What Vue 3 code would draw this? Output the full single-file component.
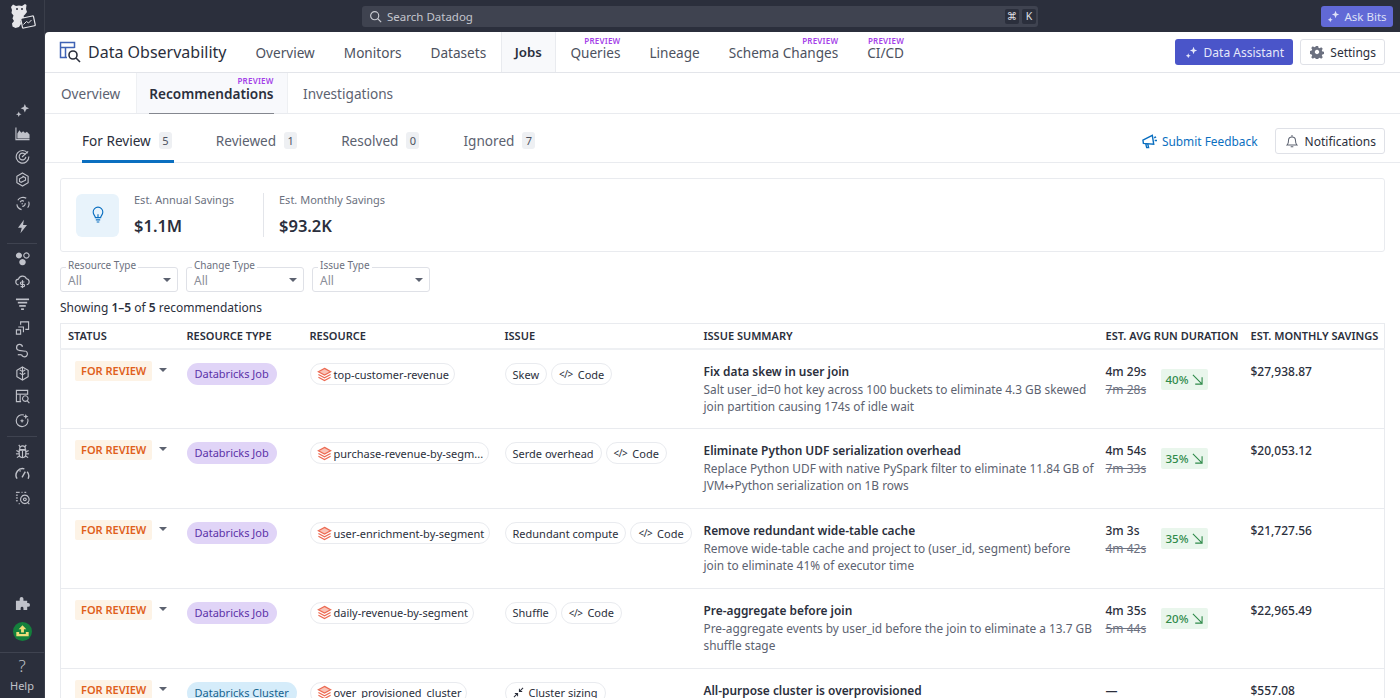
<script setup>
const sideTop = [
  { f: ['M10.5 1l1.3 3.2 3.2 1.3-3.2 1.3-1.3 3.2-1.3-3.2-3.2-1.3 3.2-1.3z', 'M4 9l.9 2.1 2.1.9-2.1.9-.9 2.1-.9-2.1-2.1-.9 2.1-.9z'] },
  { s: ['M1 1.5V14.5H15.5'], f: ['M2.5 13.2V8l2.2-3.4 2 2.6 2-1.6 2 1.8 2-1.2 2.8 2.8v4.2z'] },
  { s: ['M13.5 4.5A6.7 6.7 0 1 0 14.7 8', 'M11 6A3.6 3.6 0 1 0 11.6 8.4', 'M7.5 8.5L14 2.5'] },
  { s: ['M8 1l6 3.5v7L8 15l-6-3.5v-7z', 'M8 4.2l3.2 1.9v2.6L6.5 11 4.8 10V7.2L9.5 4.8'] },
  { s: ['M3 4.5A6.5 6.5 0 0 1 12 2.5', 'M2 9a6.5 6.5 0 0 0 5 5.5', 'M14.5 6a6.5 6.5 0 0 1-1 6.5', 'M5.5 6.5a3 3 0 0 1 4-1', 'M10.8 7.5a3 3 0 0 1-3 3.6', 'M7 8.2h1.5'] },
  { f: ['M9.5 .8L3.2 9.2h4L5.8 15.2l7-8.8H8.6z'] },
]
const sideMid = [
  { f: ['M4.2 1.5a3.2 3.2 0 1 0 .01 0z', 'M8 8.5a3.4 3.4 0 1 0 .01 0z'], s: ['M12.2 2a2.8 2.8 0 1 0 .01 0z'] },
  { s: ['M4 11.5a3 3 0 0 1-.3-6A4.5 4.5 0 0 1 12.2 5a3.3 3.3 0 0 1 .3 6.5', 'M8 6.5v8.5', 'M10 8.5H7a1.2 1.2 0 0 0 0 2.5h2a1.2 1.2 0 0 1 0 2.5H6'] },
  { s: ['M1 2.5h14', 'M3 6h10', 'M4.5 9.5h7', 'M6.5 13h3'], w: 1.8 },
  { s: ['M6 5V2h8.5v8H11', 'M3.5 7.5H9V13', 'M1.5 10.5h4.5v4.5H1.5z'] },
  { s: ['M4 7.8a3.2 3.2 0 1 1 4-3.8', 'M4 7.8l7 1', 'M11 8.5a3.2 3.2 0 1 1-4 4', 'M7 12.5H3'], w: 1.3 },
  { s: ['M8 1l6 3.5v7L8 15l-6-3.5v-7z', 'M8 1v14', 'M8 6l3-2', 'M8 9.5l3-2', 'M8 6L5 4', 'M8 9.5l-3-2'] },
  { s: ['M6.5 13.5H1.5V1.5h12V6', 'M1.5 5.5h12', 'M5.5 5.5v8', 'M11 7.2a3 3 0 1 0 .01 0z', 'M13 12.5l2.3 2.5'] },
  { s: ['M13.5 6a6.3 6.3 0 1 1-4-3.8'], f: ['M11.5 1l.8 2 2 .8-2 .8-.8 2-.8-2-2-.8 2-.8z', 'M7.5 6l.7 1.6 1.6.7-1.6.7-.7 1.6-.7-1.6-1.6-.7 1.6-.7z'] },
]
const sideBottom = [
  { s: ['M5 5a3 3 0 0 1 6 0v1H5z', 'M4.5 6.5h7V11a3.5 3.5 0 0 1-7 0z', 'M8 7v7', 'M4.5 8.5L1.5 7', 'M4.5 10.5H1', 'M5 12.5l-3 2', 'M11.5 8.5l3-1.5', 'M11.5 10.5H15', 'M11 12.5l3 2', 'M5.5 3L4 1', 'M10.5 3L12 1'] },
  { s: ['M2.2 12.5A7 7 0 0 1 10 2', 'M13 5a7 7 0 0 1 1 7.5', 'M7.5 11L11 5', 'M5 3.5l.8 1.3'], w: 1.5 },
  { s: ['M1 2.5h4', 'M7 2.5h1', 'M10 2.5h2', 'M1 5.5h2', 'M1 8.5h2', 'M1 11.5h2', 'M4 14.5h1', 'M10.5 5.5a4.5 4.5 0 1 0 .01 0z', 'M10.5 8.5a1.5 1.5 0 1 0 .01 0z', 'M13.5 13.2l1.8 1.8'] },
]

const navItems = [
  { label: 'Overview' },
  { label: 'Monitors' },
  { label: 'Datasets' },
  { label: 'Jobs', active: true },
  { label: 'Queries', preview: true },
  { label: 'Lineage' },
  { label: 'Schema Changes', preview: true },
  { label: 'CI/CD', preview: true },
]

const reviewTabs = [
  { label: 'For Review', count: 5, active: true },
  { label: 'Reviewed', count: 1 },
  { label: 'Resolved', count: 0 },
  { label: 'Ignored', count: 7 },
]

const filters = ['Resource Type', 'Change Type', 'Issue Type']

const rows = [
  {
    type: 'Databricks Job', resource: 'top-customer-revenue', issue: 'Skew', code: true,
    title: 'Fix data skew in user join',
    text: 'Salt user_id=0 hot key across 100 buckets to eliminate 4.3 GB skewed join partition causing 174s of idle wait',
    now: '4m 29s', before: '7m 28s', pct: '40%', savings: '$27,938.87',
  },
  {
    type: 'Databricks Job', resource: 'purchase-revenue-by-segm...', issue: 'Serde overhead', code: true,
    title: 'Eliminate Python UDF serialization overhead',
    text: 'Replace Python UDF with native PySpark filter to eliminate 11.84 GB of JVM↔Python serialization on 1B rows',
    now: '4m 54s', before: '7m 33s', pct: '35%', savings: '$20,053.12',
  },
  {
    type: 'Databricks Job', resource: 'user-enrichment-by-segment', issue: 'Redundant compute', code: true,
    title: 'Remove redundant wide-table cache',
    text: 'Remove wide-table cache and project to (user_id, segment) before join to eliminate 41% of executor time',
    now: '3m 3s', before: '4m 42s', pct: '35%', savings: '$21,727.56',
  },
  {
    type: 'Databricks Job', resource: 'daily-revenue-by-segment', issue: 'Shuffle', code: true,
    title: 'Pre-aggregate before join',
    text: 'Pre-aggregate events by user_id before the join to eliminate a 13.7 GB shuffle stage',
    now: '4m 35s', before: '5m 44s', pct: '20%', savings: '$22,965.49',
  },
  {
    type: 'Databricks Cluster', cluster: true, resource: 'over_provisioned_cluster', issue: 'Cluster sizing', sizing: true,
    title: 'All-purpose cluster is overprovisioned',
    now: '—', savings: '$557.08',
  },
]
</script>

<template>
  <div class="page">
    <aside class="sidebar">
      <svg class="logo" viewBox="0 0 26 28" width="26" height="28">
        <path fill="#e6e6ea" d="M3 1.5l3 1.5 3-.5 3 .5 3-2 1.5 1-.5 4 1 3-2 2.5-1.5 1.5 1 2-4 3 .5 3-2 3-3.5 1-3-1.5-.5-3 2-2.5-1.5-2.5 1-3-2-2.5.5-3-1-3z" />
        <rect x="11.5" y="14" width="13" height="10" rx="1" fill="#2b2f3c" stroke="#e6e6ea" stroke-width="1.2" transform="rotate(-12 18 19)" />
        <path d="M13.5 21.5l3-3 2 1.5 3-3" fill="none" stroke="#e6e6ea" stroke-width="1" />
        <circle cx="7" cy="6" r="1" fill="#2b2f3c" />
        <circle cx="12" cy="6" r="1" fill="#2b2f3c" />
      </svg>
      <div class="side-group side-first">
        <svg v-for="(icon, i) in sideTop" :key="i" viewBox="0 0 16 16" class="side-icon">
          <path v-for="d in icon.f" :key="d" :d="d" fill="currentColor" />
          <path v-for="d in icon.s" :key="d" :d="d" fill="none" stroke="currentColor" :stroke-width="icon.w || 1.2" />
        </svg>
      </div>
      <div class="side-sep"></div>
      <div class="side-group">
        <svg v-for="(icon, i) in sideMid" :key="i" viewBox="0 0 16 16" class="side-icon">
          <path v-for="d in icon.f" :key="d" :d="d" fill="currentColor" />
          <path v-for="d in icon.s" :key="d" :d="d" fill="none" stroke="currentColor" :stroke-width="icon.w || 1.2" />
        </svg>
      </div>
      <div class="side-sep sep-low"></div>
      <div class="side-group">
        <svg v-for="(icon, i) in sideBottom" :key="i" viewBox="0 0 16 16" class="side-icon">
          <path v-for="d in icon.s" :key="d" :d="d" fill="none" stroke="currentColor" :stroke-width="icon.w || 1.2" />
        </svg>
      </div>
      <div class="side-foot">
        <svg viewBox="0 0 16 16" class="side-icon puzzle">
          <path fill="currentColor" d="M1 15V5h4V3a2 2 0 0 1 4 0v2h4v2.5h1a2 2 0 0 1 0 4h-1V15H9v-2a1.5 1.5 0 0 0-3 0v2z" />
        </svg>
        <svg viewBox="0 0 20 20" class="upload">
          <circle cx="10" cy="10" r="10" fill="#14803c" />
          <path d="M3.5 10.5v4.5h13v-4.5h-3v2h-7v-2z" fill="#f0dd7a" />
          <path d="M10 3.5L6 7.5h2.5v3.5h3V7.5H14z" fill="#f0dd7a" />
        </svg>
        <div class="side-sep foot-sep"></div>
        <div class="help">
          <span class="help-mark">?</span>
          <span>Help</span>
        </div>
      </div>
    </aside>

    <div class="right">
      <header class="topbar">
        <div class="search">
          <svg viewBox="0 0 16 16" width="13" height="13">
            <circle cx="7" cy="7" r="5" fill="none" stroke="#c9cbd2" stroke-width="1.4" />
            <path d="M10.8 10.8L15 15" stroke="#c9cbd2" stroke-width="1.4" />
          </svg>
          <span>Search Datadog</span>
          <div class="keys">
            <kbd>⌘</kbd>
            <kbd>K</kbd>
          </div>
        </div>
        <button class="ask-bits">
          <svg viewBox="0 0 16 16" width="13" height="13">
            <path fill="currentColor" d="M10.5 1l1.3 3.2 3.2 1.3-3.2 1.3-1.3 3.2-1.3-3.2-3.2-1.3 3.2-1.3zM4 9l.9 2.1 2.1.9-2.1.9-.9 2.1-.9-2.1-2.1-.9 2.1-.9z" />
          </svg>
          Ask Bits
        </button>
      </header>

      <main class="main">
        <div class="product-bar">
          <div class="product">
            <svg viewBox="0 0 22 22" width="22" height="22">
              <g fill="none" stroke="#3f63b5" stroke-width="1.5">
                <path d="M8 16.5H1.5V1.5h14V7" />
                <path d="M1.5 6.5h14" />
                <path d="M6.5 6.5v10" />
              </g>
              <g fill="none" stroke="#2b2f3c" stroke-width="1.6">
                <circle cx="14" cy="14" r="4" />
                <path d="M17 17l4 4" />
              </g>
            </svg>
            <span>Data Observability</span>
          </div>
          <nav class="product-nav">
            <a v-for="item in navItems" :key="item.label" :class="['nav-item', { active: item.active }]">
              <em v-if="item.preview" class="preview">PREVIEW</em>
              <span class="nav-label">{{ item.label }}</span>
            </a>
          </nav>
          <div class="product-actions">
            <button class="btn-assistant">
              <svg viewBox="0 0 16 16" width="13" height="13">
                <path fill="currentColor" d="M10.5 1l1.3 3.2 3.2 1.3-3.2 1.3-1.3 3.2-1.3-3.2-3.2-1.3 3.2-1.3zM4 9l.9 2.1 2.1.9-2.1.9-.9 2.1-.9-2.1-2.1-.9 2.1-.9z" />
              </svg>
              Data Assistant
            </button>
            <button class="btn-plain">
              <svg viewBox="0 0 16 16" width="14" height="14">
                <path fill="#6c7180" fill-rule="evenodd" d="M6.7 1h2.6l.4 2 1.3.6 1.8-1.1 1.8 1.8-1.1 1.8.6 1.3 2 .4v2.6l-2 .4-.6 1.3 1.1 1.8-1.8 1.8-1.8-1.1-1.3.6-.4 2H6.7l-.4-2-1.3-.6-1.8 1.1-1.8-1.8 1.1-1.8-.6-1.3-2-.4V6.8l2-.4.6-1.3-1.1-1.8 1.8-1.8L4.9 2.6l1.4-.6zM8 5.500a2.500 2.500 0 1 0 .01 0z" />
              </svg>
              Settings
            </button>
          </div>
        </div>

        <div class="sub-bar">
          <a class="sub-item">Overview</a>
          <a class="sub-item active">
            <em class="preview">PREVIEW</em>
            <span class="sub-label">Recommendations</span>
          </a>
          <a class="sub-item">Investigations</a>
        </div>

        <div class="review-bar">
          <div class="review-tabs">
            <a v-for="tab in reviewTabs" :key="tab.label" :class="['review-tab', { active: tab.active }]">
              {{ tab.label }}
              <span class="count">{{ tab.count }}</span>
            </a>
          </div>
          <a class="feedback">
            <svg viewBox="0 0 16 16" width="15" height="15">
              <path fill="none" stroke="#0b6fc0" stroke-width="1.5" d="M1 6.5l10-5 1.5 9.5L1.5 10zM4 10.5l1 4h2l-.8-3.7M13 4l2-1M13.5 7H16" />
            </svg>
            Submit Feedback
          </a>
          <button class="btn-plain notify">
            <svg viewBox="0 0 16 16" width="14" height="14">
              <path fill="none" stroke="#5c6270" stroke-width="1.2" d="M2.5 12.5c1.2-1 1.5-2.5 1.5-5a4 4 0 0 1 8 0c0 2.5.3 4 1.5 5zM6.5 14.5h3M8 1v2" />
            </svg>
            Notifications
          </button>
        </div>

        <div class="content">
          <section class="savings">
            <div class="bulb">
              <svg viewBox="0 0 16 20" width="14" height="18">
                <path fill="none" stroke="#0b6fc0" stroke-width="1.3" d="M5 13c0-2-2.5-3-2.5-6.5a5.5 5.5 0 0 1 11 0C13.5 10 11 11 11 13zM5.5 15.5h5M6.5 18h3M8 13V9" />
              </svg>
            </div>
            <div class="stat">
              <div class="stat-label">Est. Annual Savings</div>
              <div class="stat-value">$1.1M</div>
            </div>
            <div class="stat stat-next">
              <div class="stat-label">Est. Monthly Savings</div>
              <div class="stat-value">$93.2K</div>
            </div>
          </section>

          <div class="filters">
            <div v-for="name in filters" :key="name" class="filter">
              <label>{{ name }}</label>
              <span>All</span>
              <i class="caret"></i>
            </div>
          </div>

          <p class="showing">Showing <b>1–5</b> of <b>5</b> recommendations</p>

          <table class="recs">
            <colgroup>
              <col style="width: 119px" />
              <col style="width: 123px" />
              <col style="width: 195px" />
              <col style="width: 199px" />
              <col style="width: 402px" />
              <col style="width: 145px" />
              <col />
            </colgroup>
            <thead>
              <tr>
                <th>Status</th>
                <th>Resource Type</th>
                <th>Resource</th>
                <th>Issue</th>
                <th>Issue Summary</th>
                <th>Est. Avg Run Duration</th>
                <th>Est. Monthly Savings</th>
              </tr>
            </thead>
            <tbody>
              <tr v-for="row in rows" :key="row.resource">
                <td>
                  <div class="status">
                    <span class="status-badge">FOR REVIEW</span>
                    <i class="caret dark"></i>
                  </div>
                </td>
                <td>
                  <span :class="['type-pill', { cluster: row.cluster }]">{{ row.type }}</span>
                </td>
                <td>
                  <span class="pill resource-pill">
                    <svg viewBox="0 0 16 16" width="15" height="15">
                      <g fill="none" stroke="#ec6a52" stroke-width="1.3">
                        <path fill="#f9c4b8" d="M8 1.5l6.5 3.5L8 8.5 1.5 5z" />
                        <path d="M1.5 8L8 11.5 14.5 8" />
                        <path d="M1.5 11L8 14.5 14.5 11" />
                      </g>
                    </svg>
                    {{ row.resource }}
                  </span>
                </td>
                <td>
                  <div class="issue">
                    <span class="pill">
                      <svg v-if="row.sizing" viewBox="0 0 12 12" width="11" height="11">
                        <path fill="none" stroke="#2b2f3c" stroke-width="1.1" d="M1 11l3.5-3.5M2 7h3v3M11 1L7.5 4.5M10 5H7V2" />
                      </svg>
                      {{ row.issue }}
                    </span>
                    <span v-if="row.code" class="pill">
                      <span class="code-mark">&lt;/&gt;</span>
                      Code
                    </span>
                  </div>
                </td>
                <td>
                  <div class="sum-title">{{ row.title }}</div>
                  <div v-if="row.text" class="sum-text">{{ row.text }}</div>
                </td>
                <td>
                  <div class="duration">
                    <div class="times">
                      <div class="time-now">{{ row.now }}</div>
                      <div v-if="row.before" class="time-before">{{ row.before }}</div>
                    </div>
                    <span v-if="row.pct" class="pct">
                      {{ row.pct }}
                      <svg viewBox="0 0 12 12" width="11" height="11">
                        <path fill="none" stroke="#2f8a4a" stroke-width="1.2" d="M1 1l10 10M11 3.5V11H3.5" />
                      </svg>
                    </span>
                  </div>
                </td>
                <td class="money">{{ row.savings }}</td>
              </tr>
            </tbody>
          </table>
        </div>
      </main>
    </div>
  </div>
</template>

<style>
html, body {
  margin: 0;
  height: 100%;
  overflow: hidden;
}
</style>

<style scoped>
.page {
  display: flex;
  height: 698px;
  overflow: hidden;
  background: #2b2f3c;
  font-family: "Noto Sans", "DejaVu Sans", sans-serif;
  color: #2b2f3c;
}

/* sidebar */
.sidebar {
  width: 45px;
  flex: none;
  display: flex;
  flex-direction: column;
  align-items: center;
  color: #c0c2ca;
  border-right: 1px solid #3a3e4a;
  box-sizing: border-box;
}
.logo {
  margin-top: 3px;
  margin-left: 1px;
}
.side-group {
  display: flex;
  flex-direction: column;
  gap: 8.14px;
  align-items: center;
}
.side-first {
  margin-top: 72px;
}
.side-icon {
  width: 15px;
  height: 15px;
}
.side-sep {
  width: 30px;
  height: 1px;
  background: #3f4350;
  margin: 9px 0 7px;
}
.sep-low {
  margin: 8px 0 7px;
}
.side-foot {
  margin-top: auto;
  display: flex;
  flex-direction: column;
  align-items: center;
  width: 100%;
}
.puzzle {
  margin-bottom: 11px;
}
.upload {
  width: 19px;
  height: 19px;
}
.foot-sep {
  width: 100%;
  margin: 11px 0 4px;
}
.help {
  display: flex;
  flex-direction: column;
  align-items: center;
  font-size: 11px;
  line-height: 14px;
  padding-bottom: 5px;
  color: #c0c2ca;
}
.help-mark {
  font-size: 17px;
  line-height: 18px;
  margin-bottom: 4px;
  font-weight: 300;
}

/* top bar */
.right {
  flex: 1;
  min-width: 0;
  display: flex;
  flex-direction: column;
}
.topbar {
  height: 32px;
  flex: none;
  display: flex;
  align-items: center;
  padding: 0 7px 0 317px;
  box-sizing: border-box;
}
.search {
  width: 676px;
  height: 21px;
  box-sizing: border-box;
  background: #3f4350;
  border-radius: 3px;
  display: flex;
  align-items: center;
  gap: 5px;
  padding: 0 2px 0 7px;
  color: #c3c5cd;
  font-size: 11.5px;
}
.keys {
  margin-left: auto;
  display: flex;
  gap: 3px;
}
kbd {
  width: 14px;
  height: 15px;
  background: #2b2f3c;
  border-radius: 2px;
  font-family: inherit;
  font-size: 10.5px;
  line-height: 15px;
  text-align: center;
  color: #e0e1e6;
}
.ask-bits {
  margin-left: auto;
  width: 72px;
  height: 21px;
  border: 0;
  padding: 0;
  border-radius: 3px;
  background: #6169d6;
  color: #dfe1f7;
  font-family: inherit;
  font-size: 11.5px;
  display: flex;
  align-items: center;
  justify-content: center;
  gap: 4px;
}

/* main panel */
.main {
  flex: 1;
  min-height: 0;
  background: #fff;
  border-top-left-radius: 4px;
  overflow: hidden;
}
.product-bar {
  height: 41px;
  box-sizing: border-box;
  display: flex;
  align-items: stretch;
  border-bottom: 1px solid #e3e5ea;
  padding: 0 15px 0 14px;
}
.product {
  display: flex;
  align-items: center;
  gap: 7px;
  width: 182px;
  font-size: 16px;
  white-space: nowrap;
}
.product-nav {
  display: flex;
}
.nav-item {
  position: relative;
  display: flex;
  align-items: center;
  padding: 0 13.5px;
  font-size: 13.6px;
  line-height: 15px;
  color: #4d5260;
  white-space: nowrap;
  border-left: 1px solid transparent;
  border-right: 1px solid transparent;
}
.nav-item.active {
  background: #f8f9fb;
  border-color: #e9ebef;
  font-size: 13.3px;
  font-weight: 600;
  color: #2b2f3c;
  padding: 0 13px;
}
.preview {
  position: absolute;
  top: 5px;
  right: 13.5px;
  font-style: normal;
  font-size: 8px;
  line-height: 8px;
  font-weight: 600;
  letter-spacing: 0.2px;
  color: #a43fe8;
}
.product-actions {
  margin-left: auto;
  display: flex;
  align-items: center;
  gap: 7px;
}
button {
  cursor: pointer;
}
.btn-assistant {
  height: 26px;
  width: 118px;
  border: 0;
  border-radius: 3px;
  background: #4a55c9;
  color: #e6e8fa;
  font-family: inherit;
  font-size: 12px;
  display: flex;
  align-items: center;
  justify-content: center;
  gap: 6px;
}
.btn-plain {
  height: 26px;
  padding: 0 8px 0 9px;
  background: #fff;
  border: 1px solid #dfe1e7;
  border-radius: 3px;
  color: #2b2f3c;
  font-family: inherit;
  font-size: 12px;
  display: flex;
  align-items: center;
  gap: 6px;
}
.notify {
  margin-top: 6px;
}

.sub-bar {
  height: 41px;
  box-sizing: border-box;
  display: flex;
  align-items: stretch;
  border-bottom: 1px solid #e9ebef;
  padding-left: 2px;
}
.sub-item {
  position: relative;
  display: flex;
  align-items: center;
  padding: 0 14px;
  font-size: 13.6px;
  line-height: 15px;
  color: #5c6270;
}
.sub-item.active {
  background: #f8f9fc;
  border-left: 1px solid #eef0f3;
  border-right: 1px solid #eef0f3;
  font-weight: 600;
  color: #2b2f3c;
  padding: 0 13px 0 12px;
  margin-left: 2px;
  margin-right: 1.5px;
}
.sub-item.active .sub-label {
  align-self: stretch;
  display: flex;
  align-items: center;
  border-bottom: 1px solid #84878f;
  margin-bottom: -1px;
}
.sub-item .preview {
  right: 13px;
  top: 4px;
}

.review-bar {
  height: 49px;
  box-sizing: border-box;
  display: flex;
  align-items: center;
  border-bottom: 1px solid #e9ebef;
  padding: 0 15px 0 37px;
}
.review-tabs {
  display: flex;
  gap: 42px;
  align-self: stretch;
}
.review-tab {
  display: flex;
  align-items: center;
  gap: 8px;
  font-size: 13.6px;
  color: #5c6270;
  padding: 6px 2px 0 0;
  border-bottom: 3px solid transparent;
  margin-bottom: -1px;
}
.review-tab.active {
  color: #2b2f3c;
  border-bottom-color: #0b6fc0;
}
.count {
  min-width: 13px;
  height: 17px;
  padding: 0 2px;
  box-sizing: border-box;
  background: #eef0f3;
  border-radius: 3px;
  font-size: 11px;
  line-height: 17px;
  text-align: center;
  color: #4d5260;
}
.feedback {
  margin-left: auto;
  margin-right: 17px;
  margin-top: 6px;
  display: flex;
  align-items: center;
  gap: 5px;
  font-size: 11.9px;
  color: #0b6fc0;
}

.content {
  padding: 15px 15px 0;
}
.savings {
  height: 74px;
  box-sizing: border-box;
  border: 1px solid #e9ebef;
  border-radius: 3px;
  display: flex;
  align-items: center;
  padding-left: 15px;
}
.bulb {
  width: 43px;
  height: 43px;
  border-radius: 6px;
  background: #e8f3fb;
  display: flex;
  align-items: center;
  justify-content: center;
  margin-right: 15px;
}
.stat {
  height: 44px;
  width: 129px;
}
.stat-next {
  border-left: 1px solid #e3e5ea;
  padding-left: 15px;
}
.stat-label {
  margin-top: -1px;
  font-size: 11px;
  line-height: 16px;
  color: #6c7180;
}
.stat-value {
  font-size: 16.5px;
  line-height: 22px;
  margin-top: 7px;
  font-weight: 600;
  color: #2b2f3c;
}

.filters {
  display: flex;
  gap: 8px;
  margin-top: 15px;
}
.filter {
  position: relative;
  width: 118px;
  height: 25px;
  box-sizing: border-box;
  border: 1px solid #dfe1e7;
  border-radius: 3px;
  padding: 4px 7px 0;
  font-size: 12px;
  line-height: 17px;
  color: #8a8e99;
}
.filter label {
  position: absolute;
  top: -8px;
  left: 5px;
  padding: 0 2px;
  background: #fff;
  font-size: 10px;
  line-height: 10px;
  color: #6c7180;
}
.caret {
  position: absolute;
  right: 6px;
  top: 10px;
  width: 0;
  height: 0;
  border-left: 4px solid transparent;
  border-right: 4px solid transparent;
  border-top: 4px solid #5c6270;
}
.showing {
  margin: 7px 0 7px;
  font-size: 12px;
  line-height: 17px;
}
.showing b {
  font-weight: 600;
}

.recs {
  width: 100%;
  table-layout: fixed;
  border-collapse: collapse;
  border-top: 1px solid #e9ebef;
  border-left: 1px solid #e9ebef;
  border-right: 1px solid #e9ebef;
}
.recs th {
  height: 22px;
  padding: 0 0 2px 7px;
  text-align: left;
  font-size: 11px;
  font-weight: 600;
  text-transform: uppercase;
  white-space: nowrap;
  border-bottom: 2px solid #eef0f3;
}
.recs td {
  height: 79.75px;
  box-sizing: border-box;
  padding: 13px 5px 0 7px;
  vertical-align: top;
  font-size: 11px;
  border-bottom: 1.5px solid #e9ebef;
}
.status {
  position: relative;
  padding-left: 7px;
  margin-top: -2px;
}
.status-badge {
  display: inline-block;
  height: 20px;
  padding: 0 6px;
  line-height: 20px;
  background: #fdf3e6;
  font-size: 11px;
  font-weight: 600;
  color: #e0601c;
  border-radius: 2px;
}
.caret.dark {
  right: 8px;
  top: 7px;
}
.type-pill {
  display: block;
  width: fit-content;
  height: 22px;
  padding: 0 8px;
  line-height: 22px;
  border-radius: 11px;
  background: #e0d4f7;
  color: #5b32a8;
  font-size: 11px;
  white-space: nowrap;
}
.type-pill.cluster {
  background: #d5ecfa;
  color: #17638f;
}
.pill {
  display: inline-flex;
  align-items: center;
  gap: 2px;
  height: 22px;
  padding: 0 5px 0 6px;
  box-sizing: border-box;
  border: 1px solid #e9ebef;
  border-radius: 11px;
  background: #fff;
  font-size: 11px;
  white-space: nowrap;
}
.resource-pill {
  display: flex;
  width: fit-content;
}
.issue {
  display: flex;
  gap: 4px;
}
.issue .pill {
  padding: 0 7px;
  gap: 5px;
}
.code-mark {
  font-size: 10px;
  letter-spacing: -0.5px;
}
.sum-title {
  font-size: 11.9px;
  line-height: 18px;
  margin: -1px 0 1px;
  font-weight: 600;
}
.sum-text {
  font-size: 11.85px;
  line-height: 17px;
  color: #5c6270;
}
.duration {
  display: flex;
  align-items: center;
  gap: 15px;
}
.times {
  width: 40px;
}
.time-now {
  font-size: 12px;
  line-height: 18px;
  font-weight: 500;
  white-space: nowrap;
}
.time-before {
  font-size: 12px;
  line-height: 18px;
  color: #6c7180;
  text-decoration: line-through;
  white-space: nowrap;
}
.pct {
  display: inline-flex;
  align-items: center;
  gap: 4px;
  height: 21px;
  margin-bottom: 3px;
  padding: 0 5px;
  background: #e9f6ec;
  border-radius: 2px;
  color: #2f8a4a;
  font-size: 11.5px;
  font-weight: 500;
}
.money {
  font-size: 12px !important;
  line-height: 18px;
  font-weight: 500;
}
</style>
